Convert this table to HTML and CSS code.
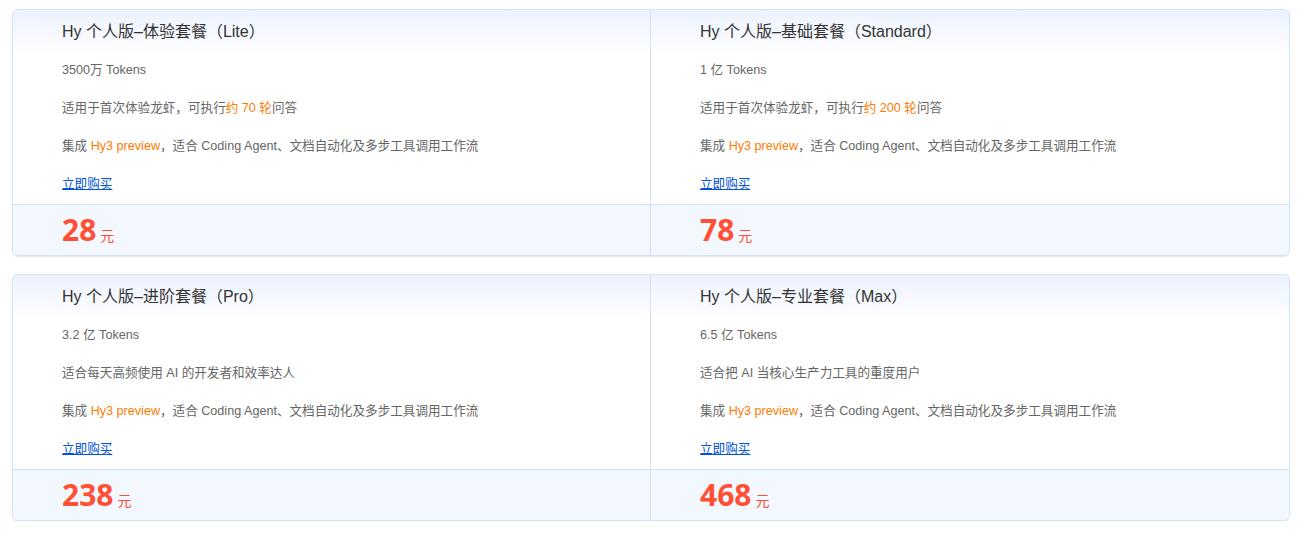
FILE: index.html
```html
<!DOCTYPE html>
<html lang="zh-CN">
<head>
<meta charset="utf-8">
<title>Hy 个人版套餐</title>
<link rel="stylesheet" href="styles.css">
</head>
<body>
<div class="page">
  <div class="card">
    <div class="cell">
      <div class="info">
        <div class="line title">Hy 个人版–体验套餐（Lite）</div>
        <div class="line">3500万 Tokens</div>
        <div class="line">适用于首次体验龙虾，可执行<span class="hl">约 70 轮</span>问答</div>
        <div class="line">集成 <span class="hl">Hy3 preview</span>，适合 Coding Agent、文档自动化及多步工具调用工作流</div>
        <div class="line"><a class="buy" href="#">立即购买</a></div>
      </div>
      <div class="price"><span class="num">28</span><span class="unit">元</span></div>
    </div>
    <div class="cell">
      <div class="info">
        <div class="line title">Hy 个人版–基础套餐（Standard）</div>
        <div class="line">1 亿 Tokens</div>
        <div class="line">适用于首次体验龙虾，可执行<span class="hl">约 200 轮</span>问答</div>
        <div class="line">集成 <span class="hl">Hy3 preview</span>，适合 Coding Agent、文档自动化及多步工具调用工作流</div>
        <div class="line"><a class="buy" href="#">立即购买</a></div>
      </div>
      <div class="price"><span class="num">78</span><span class="unit">元</span></div>
    </div>
  </div>
  <div class="card">
    <div class="cell">
      <div class="info">
        <div class="line title">Hy 个人版–进阶套餐（Pro）</div>
        <div class="line">3.2 亿 Tokens</div>
        <div class="line">适合每天高频使用 AI 的开发者和效率达人</div>
        <div class="line">集成 <span class="hl">Hy3 preview</span>，适合 Coding Agent、文档自动化及多步工具调用工作流</div>
        <div class="line"><a class="buy" href="#">立即购买</a></div>
      </div>
      <div class="price"><span class="num">238</span><span class="unit">元</span></div>
    </div>
    <div class="cell">
      <div class="info">
        <div class="line title">Hy 个人版–专业套餐（Max）</div>
        <div class="line">6.5 亿 Tokens</div>
        <div class="line">适合把 AI 当核心生产力工具的重度用户</div>
        <div class="line">集成 <span class="hl">Hy3 preview</span>，适合 Coding Agent、文档自动化及多步工具调用工作流</div>
        <div class="line"><a class="buy" href="#">立即购买</a></div>
      </div>
      <div class="price"><span class="num">468</span><span class="unit">元</span></div>
    </div>
  </div>
</div>
</body>
</html>
```
FILE: styles.css
```css
html, body {
  margin: 0;
  padding: 0;
  background: #ffffff;
}
body {
  font-family: "Liberation Sans", "Noto Sans CJK SC", sans-serif;
  color: #666666;
  font-size: 12.6px;
}
.page {
  padding: 9px 25px 0 12px;
  display: flex;
  flex-direction: column;
  gap: 18px;
}
.card {
  display: grid;
  grid-template-columns: 1fr 1fr;
  border: 1px solid #d3e2f6;
  border-radius: 6px;
  overflow: hidden;
  box-shadow: 0 1px 1px rgba(160, 185, 215, 0.35);
  background: linear-gradient(to bottom, #ecf2fe 0px, #ffffff 46px);
}
.cell {
  display: flex;
  flex-direction: column;
}
.cell:first-child {
  border-right: 1px solid #cfe0f7;
}
.info {
  padding: 3px 0 1px 49px;
  border-bottom: 1px solid #cfe0f7;
}
.line {
  height: 38px;
  line-height: 38px;
  white-space: nowrap;
}
.title {
  font-size: 16px;
  color: #333333;
}
.hl {
  color: #ff7a00;
}
.buy {
  color: #0052d9;
  text-decoration: underline;
}
.price {
  background: #f3f8fe;
  height: 50px;
  padding-left: 49px;
  display: flex;
  align-items: center;
  color: #ff4f35;
}
.num {
  font-family: "Noto Sans", "Liberation Sans", sans-serif;
  font-size: 30px;
  font-weight: bold;
  line-height: 1;
}
.unit {
  font-size: 14px;
  margin-left: 4px;
  margin-top: 10px;
}
```
